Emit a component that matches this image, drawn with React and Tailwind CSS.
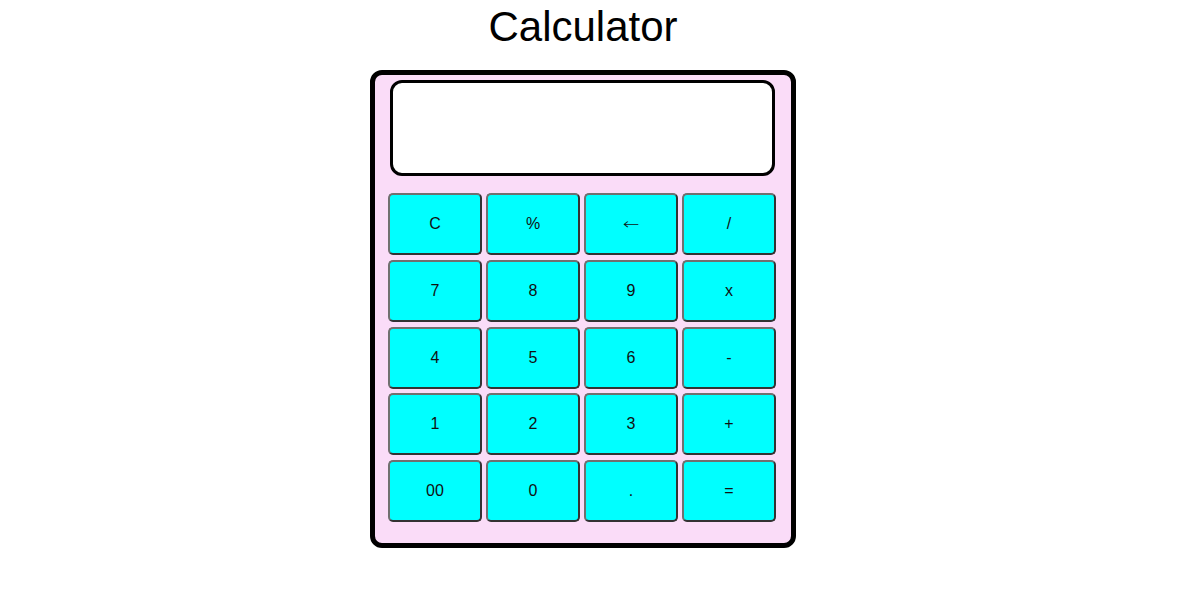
export default function App() {
  const keys = ["C", "%", "←", "/", "7", "8", "9", "x", "4", "5", "6", "-", "1", "2", "3", "+", "00", "0", ".", "="];
  return (
    <div className="flex flex-col items-center pr-[37px] font-['Liberation_Sans',Arial,sans-serif] text-black">
      <h1 className="mt-[6px] text-[42px] leading-none font-normal">Calculator</h1>
      <div className="mt-[22px] box-border w-[426px] h-[478px] border-[5px] border-black rounded-[12px] bg-[#fadcf8] pl-[13px] pt-[5px]">
        <div className="ml-[2px] w-[385px] h-[96px] border-[3px] border-black rounded-[12px] bg-white"></div>
        <div className="mt-[17px] grid grid-cols-[94px_94px_94px_94px] auto-rows-[62px] gap-x-[4px] gap-y-[4.75px]">
          {keys.map((k) => (
            <button
              key={k}
              className="flex items-center justify-center rounded-[5px] border-2 border-t-[#707070] border-l-[#707070] border-r-[#333333] border-b-[#333333] bg-[#00ffff] text-[16px] text-[#111]"
            >
              {k === "←" ? (
                <span className="font-['DejaVu_Sans',sans-serif] text-[20px] font-light leading-none scale-y-75">←</span>
              ) : (
                k
              )}
            </button>
          ))}
        </div>
      </div>
    </div>
  );
}
